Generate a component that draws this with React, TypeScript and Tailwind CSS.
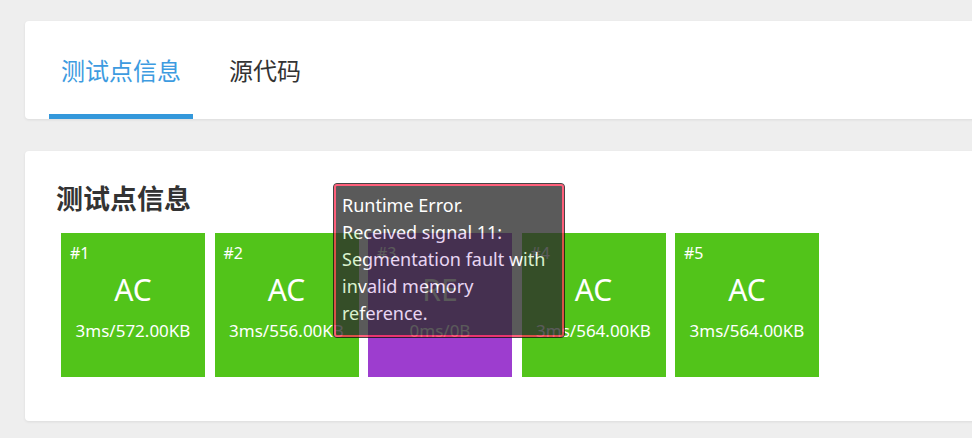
import React from "react";

const font = { fontFamily: '"Noto Sans", "Noto Sans CJK SC", sans-serif' };

type Case = { id: number; status: string; info: string; color: string };

const cases: Case[] = [
  { id: 1, status: "AC", info: "3ms/572.00KB", color: "bg-[#52c41a]" },
  { id: 2, status: "AC", info: "3ms/556.00KB", color: "bg-[#52c41a]" },
  { id: 3, status: "RE", info: "0ms/0B", color: "bg-[#9d3dcf]" },
  { id: 4, status: "AC", info: "3ms/564.00KB", color: "bg-[#52c41a]" },
  { id: 5, status: "AC", info: "3ms/564.00KB", color: "bg-[#52c41a]" },
];

function CaseBox({ c }: { c: Case }) {
  return (
    <div className={`${c.color} w-[144px] h-[144px] shrink-0 text-white flex flex-col`}>
      <div className="pt-[10px] pl-[9px] text-[16px] leading-[20px]">#{c.id}</div>
      <div className="mt-[9px] text-center text-[30px] leading-[36px]">{c.status}</div>
      <div className="mt-[13px] text-center text-[17px] leading-[20px]">{c.info}</div>
    </div>
  );
}

export default function App() {
  return (
    <div
      className="relative w-[972px] h-[438px] overflow-hidden bg-[#eeeeee] pl-[25px] pt-[21px]"
      style={font}
    >
      <div className="w-[980px] h-[98px] bg-white rounded-[4px] shadow-[0_1px_3px_rgba(0,0,0,0.08)] flex pl-[24px] gap-[24px]">
        <div className="h-full flex flex-col justify-center pt-[6px] px-[12px] border-b-[5px] border-[#3498db] text-[#3d9be0] text-[24px] leading-[32px]">
          测试点信息
        </div>
        <div className="h-full flex flex-col justify-center pt-[6px] px-[12px] border-b-[5px] border-transparent text-[#333333] text-[24px] leading-[32px]">
          源代码
        </div>
      </div>

      <div className="mt-[32px] w-[980px] h-[270px] bg-white rounded-[4px] shadow-[0_1px_3px_rgba(0,0,0,0.08)] pl-[31px] pt-[30px]">
        <div className="text-[27px] leading-[36px] font-bold text-[#333333]">测试点信息</div>
        <div className="mt-[16px] pl-[5px] flex gap-[9.5px]">
          {cases.map((c) => (
            <CaseBox key={c.id} c={c} />
          ))}
        </div>
      </div>

      <div className="absolute left-[333px] top-[183px] w-[232px] h-[155px] opacity-[0.78] rounded-[4px] border border-[#111111] bg-[#2d2d2d]">
        <div className="h-full rounded-[3px] border-2 border-[#ff3355] px-[6px] pt-[6px] text-white text-[18px] leading-[27px]">
          Runtime Error.
          <br />
          Received signal 11: Segmentation fault with invalid memory reference.
        </div>
      </div>
    </div>
  );
}
